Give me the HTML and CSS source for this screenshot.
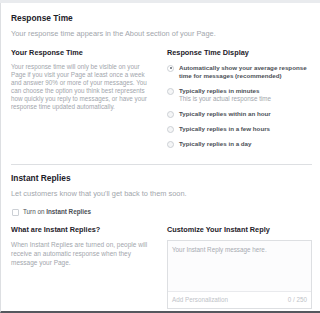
FILE: index.html
```html
<!DOCTYPE html>
<html lang="en">
<head>
    <meta charset="UTF-8">
    <meta name="viewport" content="width=device-width, initial-scale=1.0">
    <title>Response Time</title>
    <link rel="stylesheet" href="styles.css">
</head>
<body>
    <div class="page">
        <section class="section">
            <h2 class="section-title">Response Time</h2>
            <p class="section-desc">Your response time appears in the About section of your Page.</p>

            <div class="columns">
                <div class="col">
                    <h3 class="col-title">Your Response Time</h3>
                    <p class="col-text">Your response time will only be visible on your Page if you visit your Page at least once a week and answer 90% or more of your messages. You can choose the option you think best represents how quickly you reply to messages, or have your response time updated automatically.</p>
                </div>
                <div class="col">
                    <h3 class="col-title">Response Time Display</h3>
                    <ul class="options">
                        <li class="option checked">
                            <span class="radio"></span>
                            <div class="option-label">Automatically show your average response time for messages (recommended)</div>
                        </li>
                        <li class="option">
                            <span class="radio"></span>
                            <div class="option-label">Typically replies in minutes
                                <span class="option-note">This is your actual response time</span>
                            </div>
                        </li>
                        <li class="option">
                            <span class="radio"></span>
                            <div class="option-label">Typically replies within an hour</div>
                        </li>
                        <li class="option">
                            <span class="radio"></span>
                            <div class="option-label">Typically replies in a few hours</div>
                        </li>
                        <li class="option">
                            <span class="radio"></span>
                            <div class="option-label">Typically replies in a day</div>
                        </li>
                    </ul>
                </div>
            </div>
        </section>

        <section class="section instant">
            <h2 class="section-title">Instant Replies</h2>
            <p class="section-desc">Let customers know that you'll get back to them soon.</p>

            <label class="toggle">
                <span class="checkbox"></span>
                <span>Turn on <b>Instant Replies</b></span>
            </label>

            <div class="columns columns-tight">
                <div class="col">
                    <h3 class="col-title">What are Instant Replies?</h3>
                    <p class="col-text wide">When Instant Replies are turned on, people will receive an automatic response when they message your Page.</p>
                </div>
                <div class="col">
                    <h3 class="col-title">Customize Your Instant Reply</h3>
                    <div class="reply-box">
                        <div class="reply-input">Your Instant Reply message here.</div>
                        <div class="reply-footer">
                            <span>Add Personalization</span>
                            <span>0 / 250</span>
                        </div>
                    </div>
                </div>
            </div>
        </section>
    </div>
</body>
</html>
```

FILE: styles.css
```css
:root {
    --text-dark: #1d2129;
    --text-mid: #4b4f56;
    --text-light: #a2a6ac;
    --line: #dddfe2;
}

* {
    box-sizing: border-box;
}

body {
    margin: 0;
    background: #e9ebee;
    font-family: 'Liberation Sans', Arial, Helvetica, sans-serif;
    color: var(--text-dark);
}

.page {
    margin-top: 3px;
    height: 310px;
    padding: 10px 8px 0 10px;
    background: #fff;
    border-left: 1px solid var(--line);
    border-bottom: 2px solid #55585e;
    overflow: hidden;
}

.section-title {
    margin: 0;
    font-size: 8.4px;
    line-height: 10px;
    font-weight: bold;
}

.section-desc {
    margin: 6px 0 0;
    font-size: 7.4px;
    line-height: 9px;
    color: var(--text-light);
}

.columns {
    display: grid;
    grid-template-columns: 144px 145px;
    column-gap: 12px;
    margin-top: 10px;
}

.columns-tight {
    margin-top: 9px;
}

.col-title {
    margin: 0;
    font-size: 7.3px;
    line-height: 9px;
    font-weight: bold;
}

.col-text {
    margin: 6px 0 0;
    font-size: 6.3px;
    line-height: 8px;
    color: var(--text-light);
}

.col-text.wide {
    font-size: 6.5px;
    line-height: 9px;
}

.options {
    list-style: none;
    margin: 7px 0 0;
    padding: 0;
}

.option {
    display: flex;
    gap: 5px;
}

.option + .option {
    margin-top: 7px;
}

.radio {
    flex: none;
    position: relative;
    width: 7px;
    height: 7px;
    margin-top: 0.5px;
    border: 1px solid #ccd0d5;
    border-radius: 50%;
    background: #f5f6f7;
}

.checked .radio {
    background: #fff;
}

.checked .radio::after {
    content: '';
    position: absolute;
    left: 1.5px;
    top: 1.5px;
    width: 2px;
    height: 2px;
    border-radius: 50%;
    background: #606770;
}

.option-label {
    font-size: 6.2px;
    line-height: 8px;
    font-weight: bold;
    color: var(--text-mid);
}

.option-note {
    display: block;
    font-weight: normal;
    font-size: 6.3px;
    color: var(--text-light);
}

.instant {
    margin-top: 16px;
    padding-top: 8px;
    border-top: 1px solid var(--line);
}

.toggle {
    display: flex;
    align-items: center;
    gap: 4px;
    margin-top: 10px;
    padding-left: 1px;
    font-size: 6.3px;
    line-height: 8px;
    color: var(--text-mid);
}

.checkbox {
    width: 7px;
    height: 7px;
    border: 1px solid #ccd0d5;
    border-radius: 1px;
    background: #fff;
}

.reply-box {
    display: flex;
    flex-direction: column;
    height: 69px;
    margin-top: 6px;
    border: 1px solid var(--line);
    font-size: 6.3px;
    line-height: 8px;
}

.reply-input {
    flex: 1;
    padding: 5px 4px;
    color: #a7abb1;
    background: #fcfcfd;
}

.reply-footer {
    display: flex;
    justify-content: space-between;
    height: 17px;
    padding: 3.5px 4px 0;
    border-top: 1px solid #e9eaed;
    color: #c0c3c8;
}
```
